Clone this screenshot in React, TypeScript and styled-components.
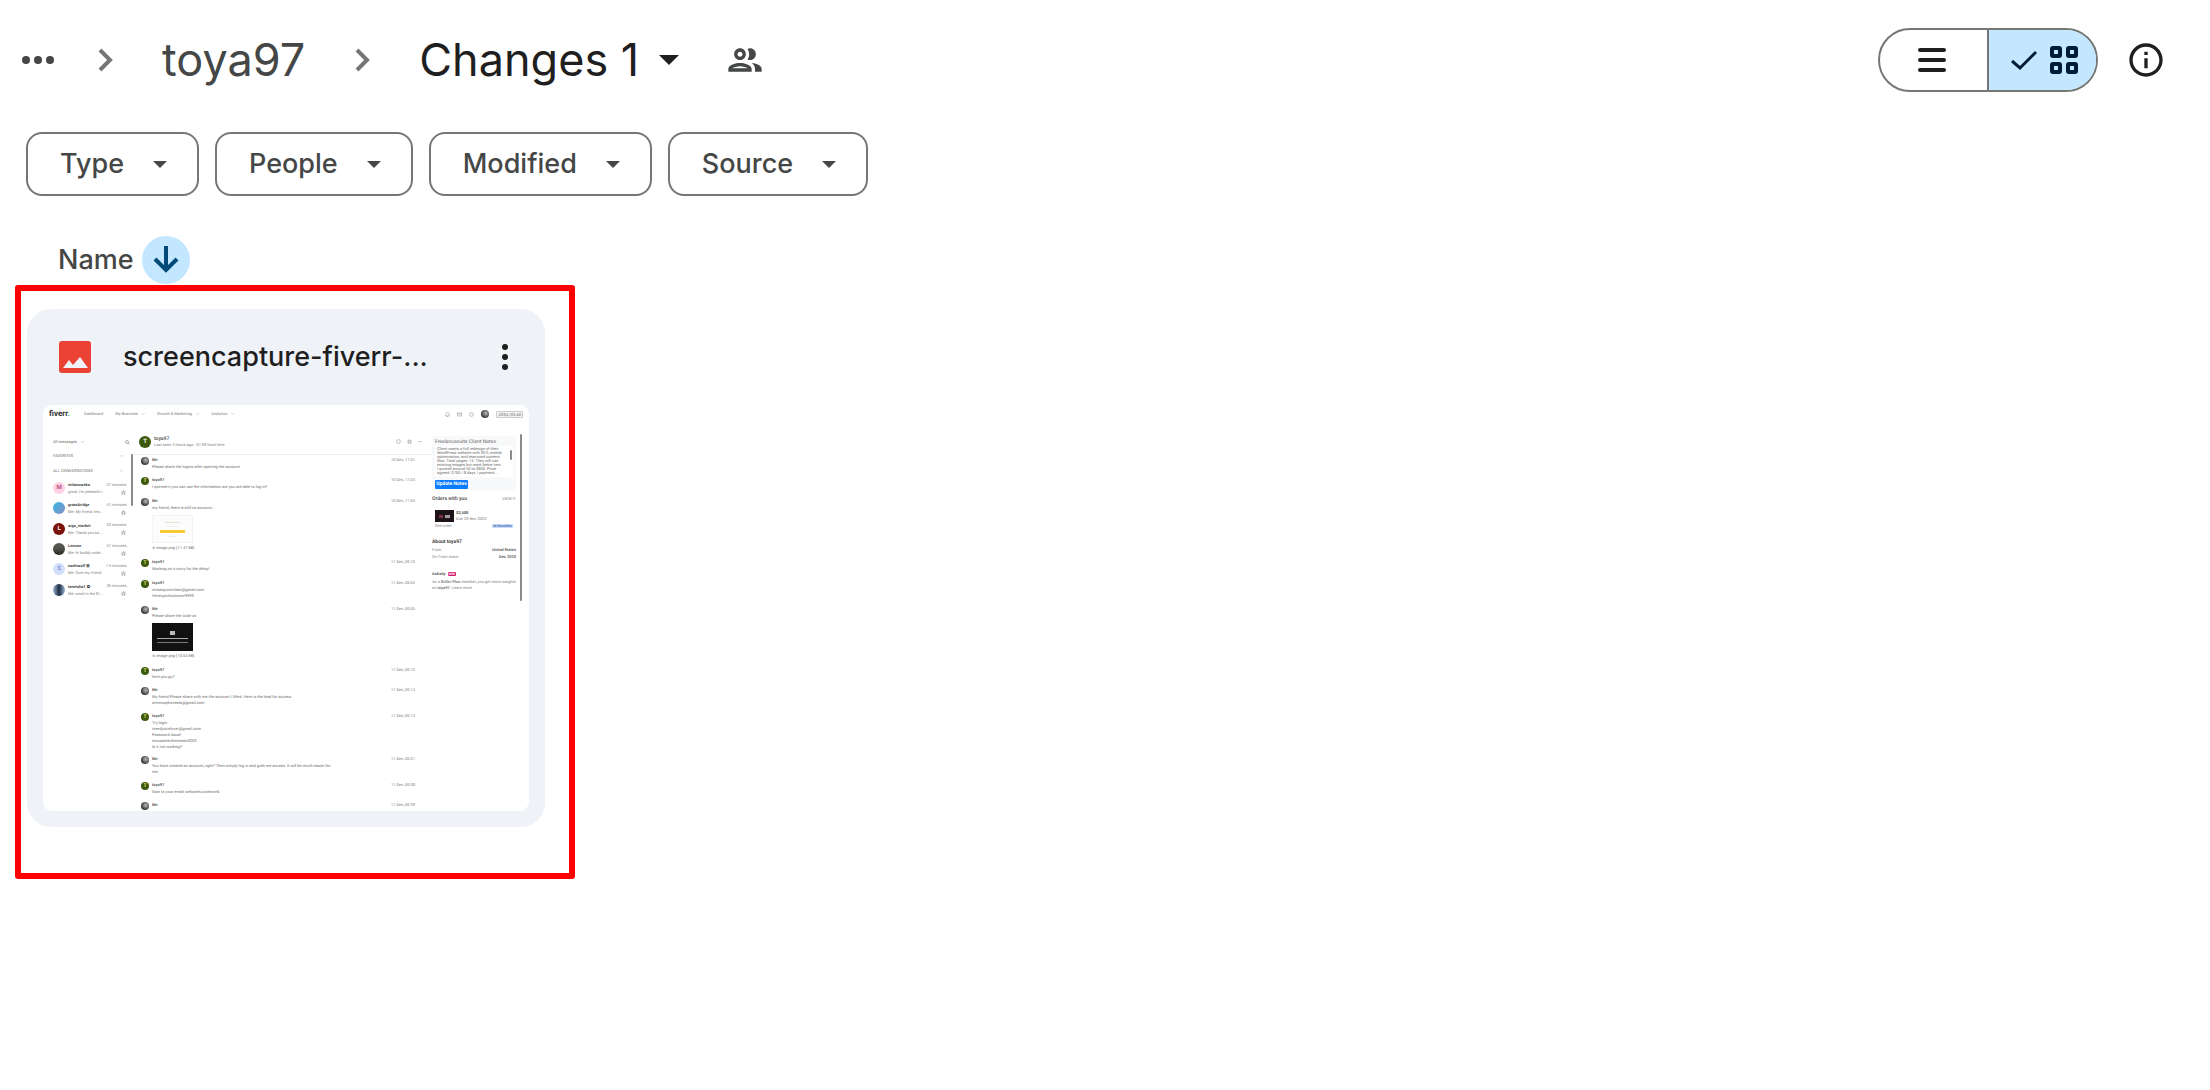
import React from "react";
import styled, { createGlobalStyle, css } from "styled-components";

const GlobalStyle = createGlobalStyle`
  * { box-sizing: border-box; }
  body {
    margin: 0;
    background: #fff;
    color: #444746;
    font-family: Inter, Roboto, sans-serif;
  }
  button { font: inherit; color: inherit; background: none; border: 0; padding: 0; cursor: pointer; }
  a { color: inherit; text-decoration: none; }
  svg { display: block; flex: none; }
  h1, h2, p, ul, ol { margin: 0; padding: 0; font: inherit; list-style: none; }
`;

/* ---------- page chrome ---------- */

const Page = styled.main`
  padding-bottom: 48px;
`;

const TopBar = styled.header`
  display: flex;
  align-items: center;
  justify-content: space-between;
  height: 120px;
  padding: 0 44px 0 22px;
`;

const Breadcrumbs = styled.nav`
  display: flex;
  align-items: center;
  gap: 40px;
  font-size: 45px;
  font-weight: 400;
  line-height: 56px;
`;

const FolderLink = styled.a`
  padding-right: 6px;
`;

const IconButton = styled.button`
  display: flex;
  align-items: center;
  justify-content: center;
`;

const CurrentFolder = styled.button`
  display: flex;
  align-items: center;
  gap: 20px;
  padding-right: 6px;
  color: #1f1f1f;
`;

const TopActions = styled.div`
  display: flex;
  align-items: center;
  gap: 28px;
  color: #1f1f1f;
`;

const ViewToggle = styled.div`
  display: flex;
  height: 64px;
  border: 2px solid #757775;
  border-radius: 32px;
  overflow: hidden;
`;

const ToggleOption = styled.button<{ $active?: boolean }>`
  display: flex;
  align-items: center;
  justify-content: center;
  gap: 12px;
  width: 107px;
  padding-right: 3px;
  ${(p) =>
    p.$active &&
    css`
      width: 109px;
      padding: 0 0 0 2px;
      background: #c2e7ff;
      color: #001d35;
      border-left: 2px solid #757775;
    `}
`;

const Filters = styled.div`
  display: flex;
  flex-wrap: wrap;
  gap: 16px;
  padding: 12px 26px 0;
`;

const Chip = styled.button`
  display: flex;
  align-items: center;
  gap: 29px;
  height: 64px;
  padding: 0 30px 0 32px;
  border: 2px solid #757775;
  border-radius: 16px;
  font-size: 27px;
  font-weight: 500;
  line-height: 36px;
`;

const SortRow = styled.div`
  display: flex;
  align-items: center;
  gap: 8px;
  padding: 40px 58px 0;
  font-size: 27px;
  font-weight: 500;
  line-height: 36px;
`;

const SortButton = styled(IconButton)`
  width: 48px;
  height: 48px;
  border-radius: 50%;
  background: #c2e7ff;
  color: #004a77;
`;

const Highlight = styled.section`
  width: 560px;
  margin: 1px 0 0 15px;
  padding: 18px 24px 46px 6px;
  border: 6px solid #f00;
  border-radius: 3px;
`;

const Card = styled.article`
  padding: 0 16px 16px;
  border-radius: 24px;
  background: #eff3f8;
`;

const CardHeader = styled.div`
  display: flex;
  align-items: center;
  height: 96px;
  padding: 0 18px 0 16px;
  color: #1f1f1f;
`;

const FileName = styled.h2`
  flex: 1;
  padding-left: 32px;
  font-size: 27px;
  font-weight: 500;
  line-height: 36px;
  white-space: nowrap;
`;

/* ---------- file preview ---------- */

const Preview = styled.div`
  display: flex;
  flex-direction: column;
  height: 406px;
  border-radius: 9px;
  background: #fff;
  overflow: hidden;
  color: #7d7e80;
  font-family: Roboto, Inter, sans-serif;
  font-size: 4px;
  line-height: 6px;
  text-rendering: geometricPrecision;
  white-space: nowrap;
`;

const SiteBar = styled.div`
  display: flex;
  align-items: center;
  justify-content: space-between;
  height: 18px;
  padding: 0 6px;
`;

const SiteNav = styled.div`
  display: flex;
  align-items: center;
  gap: 12px;
`;

const Brand = styled.span`
  width: 23px;
  color: #333;
  font-size: 8px;
  font-weight: 700;
  line-height: 10px;
  i { color: #1dbf73; font-style: normal; }
`;

const NavItem = styled.span`
  display: flex;
  align-items: center;
  gap: 4px;
`;

const SiteTools = styled.div`
  display: flex;
  align-items: center;
  gap: 7px;
`;

const Balance = styled.span`
  padding: 0 1px;
  border: 1px solid #ccc;
  border-radius: 1px;
  background: #f4f4f4;
  color: #666;
  line-height: 5px;
`;

const Columns = styled.div`
  flex: 1;
  display: grid;
  grid-template-columns: 90px 1fr 97px;
  min-height: 0;
`;

const Inbox = styled.aside`
  display: flex;
  justify-content: space-between;
  padding: 13px 0 0 10px;
`;

const InboxList = styled.div`
  width: 70px;
`;

const InboxRow = styled.div<{ $height: number }>`
  display: flex;
  align-items: center;
  justify-content: space-between;
  height: ${(p) => p.$height}px;
  color: #666;
`;

const Scrollbar = styled.i<{ $top: number; $height: number }>`
  width: 2px;
  height: ${(p) => p.$height}px;
  margin-top: ${(p) => p.$top}px;
  border-radius: 1px;
  background: #8a8a8a;
`;

const ContactList = styled.ul`
  display: grid;
  grid-auto-rows: 1fr;
  height: 122px;
`;

const Contact = styled.li`
  display: grid;
  grid-template-columns: 12px 1fr auto;
  align-items: center;
  column-gap: 3px;
`;

const ContactText = styled.div`
  line-height: 7px;
`;

const ContactMeta = styled.div`
  display: flex;
  flex-direction: column;
  align-items: flex-end;
  justify-content: space-between;
  height: 13px;
`;

const Strong = styled.b`
  display: block;
  color: #333;
  font-weight: 600;
`;

const Avatar = styled.span<{ $bg: string; $size: number; $color?: string }>`
  display: flex;
  align-items: center;
  justify-content: center;
  flex: none;
  width: ${(p) => p.$size}px;
  height: ${(p) => p.$size}px;
  border-radius: 50%;
  background: ${(p) => p.$bg};
  color: ${(p) => p.$color || "#fff"};
  font-size: ${(p) => (p.$size > 8 ? 6 : 5)}px;
  font-weight: 600;
`;

const Thread = styled.div`
  display: flex;
  flex-direction: column;
  min-width: 0;
`;

const ThreadHeader = styled.div`
  display: flex;
  align-items: center;
  gap: 3px;
  height: 32px;
  padding: 7px 10px 0 6px;
  border-bottom: 1px solid #f0f0f0;
`;

const ThreadTitle = styled.div`
  flex: 1;
  b { display: block; color: #555; font-size: 5px; font-weight: 600; }
`;

const ThreadTools = styled.div`
  display: flex;
  gap: 6px;
`;

const MessageRow = styled.div<{ $height: number }>`
  display: grid;
  grid-template-columns: 8px 1fr auto;
  column-gap: 3px;
  height: ${(p) => p.$height}px;
  flex: none;
  padding: 0 20px 0 8px;
`;

const MessageAvatar = styled.div`
  padding-top: 2px;
`;

const MessageBody = styled.div`
  color: #6c6c6c;
  b { display: block; color: #555; font-weight: 600; line-height: 9px; }
`;

const MessageDate = styled.span`
  width: 21px;
  line-height: 9px;
`;

const Attachment = styled.div<{ $dark?: boolean }>`
  display: flex;
  flex-direction: column;
  align-items: center;
  justify-content: center;
  gap: 3px;
  width: 41px;
  height: 28px;
  margin: 4px 0 2px;
  border: 1px solid ${(p) => (p.$dark ? "#111" : "#f3f3f3")};
  background: ${(p) => (p.$dark ? "#111" : "#fcfcfc")};
`;

const Stroke = styled.i<{ $width: number; $height?: number; $bg: string }>`
  width: ${(p) => p.$width}px;
  height: ${(p) => p.$height || 1}px;
  background: ${(p) => p.$bg};
`;

const Details = styled.aside`
  display: flex;
  justify-content: space-between;
  padding: 11px 7px 0 0;
`;

const DetailsContent = styled.div`
  width: 84px;
  padding-top: 2px;
`;

const Notes = styled.div`
  height: 54px;
  padding: 3px;
  border-radius: 2px;
  background: #f8f9fb;
  color: #666;
`;

const NotesTitle = styled.div`
  font-size: 5px;
`;

const NotesText = styled.div`
  display: flex;
  justify-content: space-between;
  height: 31px;
  margin-top: 1px;
  padding: 1px 1px 0 2px;
  background: #fff;
  line-height: 4px;
`;

const NotesButton = styled.span`
  display: block;
  width: 33px;
  height: 9px;
  margin-top: 3px;
  border-radius: 1px;
  background: #0d7dff;
  color: #fff;
  font-size: 5px;
  font-weight: 700;
  line-height: 9px;
  text-align: center;
`;

const DetailRow = styled.div<{ $height: number }>`
  display: flex;
  align-items: center;
  justify-content: space-between;
  height: ${(p) => p.$height}px;
  b { color: #444; font-weight: 500; }
`;

const SectionTitle = styled.b`
  font-size: 5px;
`;

const DetailHeading = styled.div`
  height: 8px;
  margin-top: 8px;
  color: #333;
  font-size: 5px;
  font-weight: 600;
  line-height: 8px;
`;

const Order = styled.div`
  display: grid;
  grid-template-columns: 19px 1fr;
  gap: 0 2px;
  padding: 2px 3px 0;
`;

const OrderThumb = styled.div`
  display: flex;
  align-items: center;
  justify-content: center;
  gap: 2px;
  height: 12px;
  background: #1d1217;
`;

const OrderFooter = styled.div`
  grid-column: 1 / -1;
  display: flex;
  align-items: center;
  justify-content: space-between;
  height: 8px;
`;

const Tag = styled.span<{ $bg: string; $color: string }>`
  padding: 0 1px;
  border-radius: 1px;
  background: ${(p) => p.$bg};
  color: ${(p) => p.$color};
  font-size: 3px;
  font-weight: 600;
  line-height: 4px;
`;

const Activity = styled.div`
  display: flex;
  align-items: center;
  gap: 2px;
  height: 10px;
  margin-top: 9px;
  b { color: #444; font-weight: 600; }
`;

/* ---------- icons ---------- */

const Chevron = () => (
  <svg width="28" height="24" viewBox="0 0 28 24" fill="none" stroke="#757775" strokeWidth="4">
    <path d="M6 2l10 10L6 22" />
  </svg>
);

const Caret = ({ width = 14 }: { width?: number }) => (
  <svg width={width} height={width / 2} viewBox="0 0 20 10" fill="currentColor">
    <path d="M0 0h20L10 10z" />
  </svg>
);

const SmallCaret = () => (
  <svg width="3" height="2" viewBox="0 0 3 2" fill="none" stroke="#999" strokeWidth=".5">
    <path d="M.3.3l1.2 1.2L2.7.3" />
  </svg>
);

const Ring = ({ size = 4 }: { size?: number }) => (
  <svg width={size} height={size} viewBox="0 0 8 8" fill="none" stroke="#999" strokeWidth="1">
    <circle cx="4" cy="4" r="3" />
  </svg>
);

const Bell = () => (
  <svg width="5" height="5" viewBox="0 0 10 10" fill="none" stroke="#888" strokeWidth="1">
    <path d="M1 8h8L8 6V4a3 3 0 0 0-6 0v2zM4 9h2" />
  </svg>
);

const Mail = () => (
  <svg width="5" height="5" viewBox="0 0 10 10" fill="none" stroke="#888" strokeWidth="1">
    <path d="M1 2h8v6H1zl4 3 4-3" />
  </svg>
);

const Magnifier = () => (
  <svg width="5" height="5" viewBox="0 0 10 10" fill="none" stroke="#666" strokeWidth="1">
    <circle cx="4" cy="4" r="3" />
    <path d="M6 6l3 3" />
  </svg>
);

const Star = () => (
  <svg width="5" height="5" viewBox="0 0 10 10" fill="none" stroke="#777" strokeWidth="1">
    <path d="M5 1l1 3h3L7 6l1 3-3-2-3 2 1-3-2-2h3z" />
  </svg>
);

/* ---------- data ---------- */

const contacts = [
  { name: "mitanoweka", text: "great, I'm pleased t..", time: "37 minutes", bg: "#ffd1e3", color: "#b04878", letter: "M" },
  { name: "grassbridge", text: "Me: My friend, tea...", time: "41 minutes", bg: "linear-gradient(135deg,#35b8e8,#8a8fc4)", letter: "" },
  { name: "argo_market", text: "Me: Thank you so ...", time: "53 minutes", bg: "#7a120c", letter: "L" },
  { name: "Lennox", text: "Me: hi buddy unde...", time: "57 minutes", bg: "linear-gradient(#55564e 40%,#24291c)", letter: "" },
  { name: "sashiwolf ⊞", text: "Me: Sure my friend", time: "1 h minutes", bg: "#d3defa", color: "#7e8fd0", letter: "S" },
  { name: "taneisha1 ✪", text: "Me: send in the fil...", time: "2h minutes", bg: "linear-gradient(90deg,#9ab6d8,#1c2b3f 50%,#9ab6d8)", letter: "" },
];

type Attach = "light" | "dark";
type Msg = { me?: boolean; height: number; lines: string[]; date: string; attach?: Attach; file?: string };

const messages: Msg[] = [
  { me: true, height: 20, lines: ["Please share the logins after opening the account."], date: "10 Dec, 17:01" },
  { height: 21, lines: ["I opened it you can use the information are you are able to log in?"], date: "10 Dec, 17:04" },
  { me: true, height: 61, lines: ["my friend, there is still no account..."], date: "10 Dec, 17:04", attach: "light", file: "⤓ image.png (11.47 kB)" },
  { height: 21, lines: ["Working on it sorry for the delay!"], date: "11 Dec, 00:10" },
  { height: 26, lines: ["mosesjuiceclean@gmail.com", "Heresyoufootwear9999"], date: "11 Dec, 00:04" },
  { me: true, height: 61, lines: ["Please share the code at:"], date: "11 Dec, 00:05", attach: "dark", file: "⤓ image.png (10.04 kB)" },
  { height: 20, lines: ["here you go?"], date: "11 Dec, 00:12" },
  { me: true, height: 26, lines: ["My friend Please share with me the account I lifted. Here is the lead for access:", "ammosphoneats@gmail.com"], date: "11 Dec, 00:14" },
  { height: 43, lines: ["Try login", "ineedjuicelover@gmail.com", "Password issue!", "moussetechomeats9203", "Is it not working?"], date: "11 Dec, 00:14" },
  { me: true, height: 26, lines: ["You have created an account, right? Then simply log in and grab me access. It will be much easier for", "me."], date: "11 Dec, 00:21" },
  { height: 20, lines: ["Gain to your email websites protected."], date: "11 Dec, 00:38" },
  { me: true, height: 10, lines: [], date: "11 Dec, 00:39" },
];

const navItems = ["My Business", "Growth & Marketing", "Analytics"];

const noteLines = [
  "Client wants a full redesign of their",
  "WordPress website with SEO, mobile",
  "optimization, and improved content",
  "flow. Total pages: 14. They will use",
  "existing images but want better text.",
  "I quoted around 50 to $800. Price",
  "agreed: $700 / 8 days / payment...",
];

const filters = ["Type", "People", "Modified", "Source"];

const GREEN = "#3c5a0c";
const ME = "radial-gradient(circle at 60% 40%,#b9b9b9,#333 70%)";

/* ---------- preview sections ---------- */

const Message = ({ me, height, lines, date, attach, file }: Msg) => (
  <MessageRow $height={height}>
    <MessageAvatar>
      <Avatar $size={8} $bg={me ? ME : GREEN} $color="#f3f08a">{me ? "" : "T"}</Avatar>
    </MessageAvatar>
    <MessageBody>
      <b>{me ? "Me" : "toya97"}</b>
      {lines.map((l) => <p key={l}>{l}</p>)}
      {attach === "light" && (
        <Attachment>
          <Stroke $width={15} $bg="#e8e0c8" />
          <Stroke $width={11} $bg="#eee" />
          <Stroke $width={25} $height={3} $bg="#ffc933" />
          <Stroke $width={7} $bg="#eee" />
        </Attachment>
      )}
      {attach === "dark" && (
        <Attachment $dark>
          <Stroke $width={5} $height={4} $bg="#bbb" />
          <Stroke $width={31} $bg="#aaa" />
          <Stroke $width={31} $bg="#777" />
        </Attachment>
      )}
      {file && <p>{file}</p>}
    </MessageBody>
    <MessageDate>{date}</MessageDate>
  </MessageRow>
);

const FilePreview = () => (
  <Preview>
    <SiteBar>
      <SiteNav>
        <Brand>fiverr<i>.</i></Brand>
        <NavItem>Dashboard</NavItem>
        {navItems.map((n) => <NavItem key={n}>{n}<SmallCaret /></NavItem>)}
      </SiteNav>
      <SiteTools>
        <Bell /><Mail /><Ring size={5} />
        <Avatar $size={8} $bg={ME} />
        <Balance>US$4,705.60</Balance>
      </SiteTools>
    </SiteBar>
    <Columns>
      <Inbox>
        <InboxList>
          <InboxRow $height={12}><NavItem>All messages <SmallCaret /></NavItem></InboxRow>
          <InboxRow $height={15}>FAVORITES <SmallCaret /></InboxRow>
          <InboxRow $height={15}>ALL CONVERSATIONS <SmallCaret /></InboxRow>
          <ContactList>
            {contacts.map((c) => (
              <Contact key={c.name}>
                <Avatar $size={12} $bg={c.bg} $color={c.color}>{c.letter}</Avatar>
                <ContactText><Strong>{c.name}</Strong>{c.text}</ContactText>
                <ContactMeta><span>{c.time}</span><Star /></ContactMeta>
              </Contact>
            ))}
          </ContactList>
        </InboxList>
        <InboxRow $height={12}><Magnifier /></InboxRow>
        <Scrollbar $top={18} $height={52} />
      </Inbox>
      <Thread>
        <ThreadHeader>
          <Avatar $size={12} $bg={GREEN}>T</Avatar>
          <ThreadTitle><b>toya97</b>Last seen 4 hours ago · 07:09 local time</ThreadTitle>
          <ThreadTools><Ring size={5} /><Star /><span>•••</span></ThreadTools>
        </ThreadHeader>
        {messages.map((m, i) => <Message key={i} {...m} />)}
      </Thread>
      <Details>
        <DetailsContent>
          <Notes>
            <NotesTitle>Freelancesuite Client Notes</NotesTitle>
            <NotesText>
              <div>{noteLines.map((n) => <p key={n}>{n}</p>)}</div>
              <Scrollbar $top={3} $height={10} />
            </NotesText>
            <NotesButton>Update Notes</NotesButton>
          </Notes>
          <DetailRow $height={18}><SectionTitle>Orders with you</SectionTitle><span>VIEW IT</span></DetailRow>
          <Order>
            <OrderThumb>
              <Stroke $width={4} $height={3} $bg="#7a3044" />
              <Stroke $width={5} $height={3} $bg="#a89aa0" />
            </OrderThumb>
            <div><Strong>$2,500</Strong>Due 29 Nov 2025</div>
            <OrderFooter>See order <Tag $bg="#c9dcff" $color="#3b5fa8">IN PROGRESS</Tag></OrderFooter>
          </Order>
          <DetailHeading>About toya97</DetailHeading>
          <DetailRow $height={7}>From <b>United States</b></DetailRow>
          <DetailRow $height={7}>On Fiverr since <b>Dec 2020</b></DetailRow>
          <Activity><b>Activity</b><Tag $bg="#d81b72" $color="#fff">NEW</Tag></Activity>
          <p>As a <b>Seller Plus</b> member, you get more insights</p>
          <p>on <b>toya97</b>. Learn more</p>
        </DetailsContent>
        <Scrollbar $top={0} $height={167} />
      </Details>
    </Columns>
  </Preview>
);

/* ---------- page ---------- */

export default function App() {
  return (
    <Page>
      <GlobalStyle />
      <TopBar>
        <Breadcrumbs aria-label="Folder path">
          <IconButton aria-label="Show path">
            <svg width="32" height="8" viewBox="0 0 32 8" fill="currentColor">
              <circle cx="4" cy="4" r="4" /><circle cx="16" cy="4" r="4" /><circle cx="28" cy="4" r="4" />
            </svg>
          </IconButton>
          <Chevron />
          <FolderLink href="#toya97">toya97</FolderLink>
          <Chevron />
          <CurrentFolder>Changes 1<Caret width={20} /></CurrentFolder>
          <IconButton aria-label="Manage access">
            <svg width="40" height="40" viewBox="0 0 24 24" fill="currentColor">
              <path d="M9 13.75c-2.34 0-7 1.17-7 3.5V19h14v-1.75c0-2.33-4.66-3.5-7-3.5zM4.34 17c.84-.58 2.87-1.25 4.66-1.25s3.82.67 4.66 1.25H4.34zM9 12c1.93 0 3.5-1.57 3.5-3.5S10.93 5 9 5 5.5 6.57 5.5 8.5 7.07 12 9 12zm0-5c.83 0 1.5.67 1.5 1.5S9.83 10 9 10s-1.5-.67-1.5-1.5S8.17 7 9 7zm7.04 6.81c1.16.84 1.96 1.96 1.96 3.44V19h4v-1.75c0-2.02-3.5-3.17-5.96-3.44zM15 12c1.93 0 3.5-1.57 3.5-3.5S16.93 5 15 5c-.54 0-1.04.13-1.5.35.63.89 1 1.98 1 3.15s-.37 2.26-1 3.15c.46.22.96.35 1.5.35z" />
            </svg>
          </IconButton>
        </Breadcrumbs>
        <TopActions>
          <ViewToggle role="group" aria-label="View">
            <ToggleOption aria-label="List layout">
              <svg width="28" height="28" viewBox="0 0 28 28" stroke="currentColor" strokeWidth="4" strokeLinecap="round">
                <path d="M2 4h24M2 14h24M2 24h24" />
              </svg>
            </ToggleOption>
            <ToggleOption $active aria-label="Grid layout" aria-pressed="true">
              <svg width="28" height="28" viewBox="0 0 28 28" fill="none" stroke="currentColor" strokeWidth="3">
                <path d="M2 15l8 7L26 6" />
              </svg>
              <svg width="28" height="28" viewBox="0 0 28 28" fill="none" stroke="currentColor" strokeWidth="4">
                <rect x="2" y="2" width="8" height="8" rx="1" /><rect x="18" y="2" width="8" height="8" rx="1" />
                <rect x="2" y="18" width="8" height="8" rx="1" /><rect x="18" y="18" width="8" height="8" rx="1" />
              </svg>
            </ToggleOption>
          </ViewToggle>
          <IconButton aria-label="View details">
            <svg width="40" height="40" viewBox="0 0 24 24" fill="currentColor">
              <path d="M11 7h2v2h-2zm0 4h2v6h-2zm1-9C6.48 2 2 6.48 2 12s4.48 10 10 10 10-4.48 10-10S17.52 2 12 2zm0 18c-4.41 0-8-3.59-8-8s3.59-8 8-8 8 3.59 8 8-3.59 8-8 8z" />
            </svg>
          </IconButton>
        </TopActions>
      </TopBar>
      <Filters>
        {filters.map((f) => <Chip key={f}>{f}<Caret /></Chip>)}
      </Filters>
      <SortRow>
        Name
        <SortButton aria-label="Reverse sort direction">
          <svg width="28" height="28" viewBox="0 0 28 28" fill="none" stroke="currentColor" strokeWidth="4">
            <path d="M14 0v24M3 13l11 11 11-11" />
          </svg>
        </SortButton>
      </SortRow>
      <Highlight>
        <Card>
          <CardHeader>
            <svg width="32" height="32" viewBox="0 0 32 32">
              <rect width="32" height="32" rx="3" fill="#ea4335" />
              <path d="M4 27l6-8 4 5 7-8 8 11z" fill="#eff3f8" />
            </svg>
            <FileName>screencapture-fiverr-...</FileName>
            <IconButton aria-label="More actions">
              <svg width="12" height="28" viewBox="0 0 12 28" fill="currentColor">
                <circle cx="6" cy="4" r="3" /><circle cx="6" cy="14" r="3" /><circle cx="6" cy="24" r="3" />
              </svg>
            </IconButton>
          </CardHeader>
          <FilePreview />
        </Card>
      </Highlight>
    </Page>
  );
}
